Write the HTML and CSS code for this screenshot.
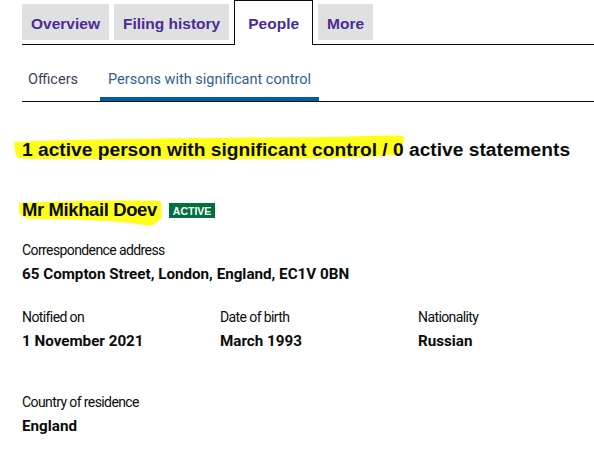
FILE: index.html
```html
<!DOCTYPE html>
<html lang="en">
<head>
    <meta charset="UTF-8">
    <meta name="viewport" content="width=device-width, initial-scale=1.0">
    <title>People - Persons with significant control</title>
    <link rel="stylesheet" href="styles.css">
</head>
<body>

    <!-- Company tabs -->
    <nav class="tabs">
        <a href="#" class="tab">Overview</a>
        <a href="#" class="tab">Filing history</a>
        <a href="#" class="tab tab-active">People</a>
        <a href="#" class="tab">More</a>
    </nav>

    <!-- People sub navigation -->
    <nav class="subnav">
        <a href="#" class="subnav-item">Officers</a>
        <a href="#" class="subnav-item subnav-active">Persons with significant control</a>
    </nav>

    <!-- PSC summary -->
    <h2 class="summary">
        <svg class="marker marker-summary" viewBox="0 0 400 28" preserveAspectRatio="none" aria-hidden="true">
            <path d="M4 8 C60 5 200 4 320 3 C360 2 385 1 398 2 L396 20 C380 22 360 23 330 24 C250 26 120 25 40 25 C25 25 12 26 6 22 Z" />
        </svg>
        <span class="summary-text">1 active person with significant control / 0 active statements</span>
    </h2>

    <!-- Person -->
    <section class="person">
        <h3 class="person-name">
            <svg class="marker marker-name" viewBox="0 0 146 30" preserveAspectRatio="none" aria-hidden="true">
                <path d="M2 6 C40 4 100 3 140 4 L141 20 C138 24 134 28 128 29 C110 24 60 22 20 22 C10 22 4 20 2 16 Z" />
            </svg>
            <span class="person-name-text">Mr Mikhail Doev</span>
            <span class="badge">Active</span>
        </h3>

        <dl class="field">
            <dt>Correspondence address</dt>
            <dd>65 Compton Street, London, England, EC1V 0BN</dd>
        </dl>

        <div class="field-row">
            <dl class="field">
                <dt>Notified on</dt>
                <dd>1 November 2021</dd>
            </dl>
            <dl class="field">
                <dt>Date of birth</dt>
                <dd>March 1993</dd>
            </dl>
            <dl class="field">
                <dt>Nationality</dt>
                <dd>Russian</dd>
            </dl>
        </div>

        <dl class="field field-last">
            <dt>Country of residence</dt>
            <dd>England</dd>
        </dl>
    </section>

</body>
</html>
```

FILE: styles.css
```css
/* General Reset */
* {
    margin: 0;
    padding: 0;
    box-sizing: border-box;
}

body {
    background: #fff;
    color: #0b0c0c;
    font-family: 'Roboto', 'Liberation Sans', sans-serif;
    padding-left: 22px;
}

a {
    text-decoration: none;
}

/* Company tabs */
.tabs {
    display: flex;
    align-items: flex-end;
    gap: 5px;
    height: 45px;
    border-bottom: 1px solid #0b0c0c;
}

.tab {
    display: flex;
    align-items: center;
    height: 36px;
    margin-bottom: 4px;
    padding: 3px 9px 0;
    background: #dee0e2;
    color: #4c2c92;
    font-family: 'Liberation Sans', Arial, sans-serif;
    font-weight: bold;
    font-size: 15.5px;
}

.tab-active {
    height: 45px;
    margin-bottom: -1px;
    padding: 2px 13px 0;
    background: #fff;
    border: 1px solid #0b0c0c;
    border-bottom: none;
}

/* People sub navigation */
.subnav {
    display: flex;
    height: 57px;
    padding-top: 26px;
    border-bottom: 1px solid #0b0c0c;
}

.subnav-item {
    padding: 0 7px 0 6px;
    margin-right: 15px;
    font-size: 14.5px;
    color: #3d4455;
    height: 30px;
}

.subnav-active {
    padding: 0 8px;
    color: #2f5f8c;
    border-bottom: 4px solid #005ea5;
}

/* PSC summary */
.summary {
    position: relative;
    margin-top: 37px;
    font-family: 'Liberation Sans', Arial, sans-serif;
    font-size: 19.2px;
    line-height: 22px;
}

.summary-text,
.person-name-text {
    position: relative;
}

.marker {
    position: absolute;
    fill: #ffff1a;
}

.marker-summary {
    left: -12px;
    top: -5px;
    width: 396px;
    height: 28px;
}

/* Person */
.person {
    margin-top: 39px;
}

.person-name {
    position: relative;
    display: flex;
    align-items: center;
    font-family: 'Liberation Sans', Arial, sans-serif;
    font-size: 18.5px;
    letter-spacing: -0.4px;
    line-height: 20px;
}

.marker-name {
    left: -5px;
    top: -3px;
    width: 150px;
    height: 30px;
}

.badge {
    margin-left: 12px;
    padding: 2px 4px 1px;
    background: #00703c;
    color: #fff;
    font-size: 10.5px;
    line-height: 12px;
    letter-spacing: 0;
    text-transform: uppercase;
}

.field {
    margin-top: 20px;
    font-size: 14px;
    line-height: 20px;
}

.field dt {
    letter-spacing: -0.6px;
}

.field dd {
    margin-top: 4px;
    font-size: 15.2px;
    font-weight: bold;
}

.field-row {
    display: grid;
    grid-template-columns: 198px 198px 1fr;
    margin-top: 23px;
}

.field-row .field {
    margin-top: 0;
}

.field-last {
    margin-top: 41px;
}
```
